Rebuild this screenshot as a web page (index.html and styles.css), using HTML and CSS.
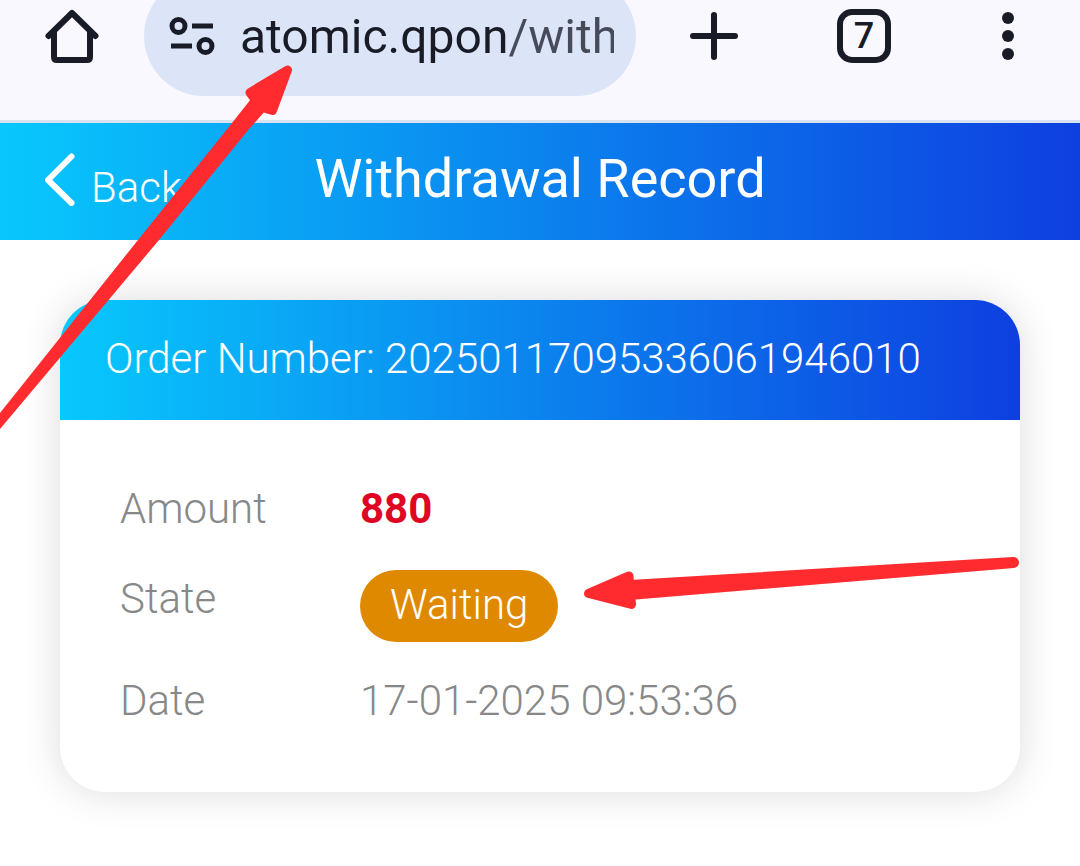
FILE: index.html
```html
<!DOCTYPE html>
<html lang="en">
<head>
<meta charset="utf-8">
<meta name="viewport" content="width=device-width, initial-scale=1">
<title>Withdrawal Record</title>
<link rel="stylesheet" href="styles.css">
</head>
<body>
<div class="toolbar">
  <div class="toolbar-row">
    <button class="tool" type="button" aria-label="Home">
      <svg width="60" height="60" viewBox="0 0 60 60" fill="none" stroke="#191b26" stroke-width="6" stroke-linecap="round" stroke-linejoin="round"><path d="M6.500 30L30 7L53.500 30"/><path d="M12 26V51Q12 54 15 54H45Q48 54 48 51V26"/></svg>
    </button>
    <div class="address">
      <svg class="site-icon" width="48" height="48" viewBox="0 0 48 48" fill="none" stroke="#191b26" stroke-width="5"><circle cx="10.500" cy="14" r="6.500"/><path d="M24 14H45M3 34H24"/><circle cx="37.500" cy="34" r="6.500"/></svg>
      <input class="url" type="text" aria-label="Address" value="atomic.qpon/with">
    </div>
    <button class="tool" type="button" aria-label="New tab">
      <svg width="60" height="60" viewBox="0 0 60 60" fill="none" stroke="#191b26" stroke-width="6" stroke-linecap="round"><path d="M30 9V51M9 30H51"/></svg>
    </button>
    <button class="tool" type="button" aria-label="Tabs"><span class="tab-count">7</span></button>
    <button class="tool" type="button" aria-label="Menu">
      <svg width="60" height="60" viewBox="0 0 60 60" fill="#191b26"><circle cx="30" cy="12" r="6"/><circle cx="30" cy="30" r="6"/><circle cx="30" cy="48" r="6"/></svg>
    </button>
  </div>
</div>
<header class="header">
  <a class="back" href="#">
    <svg width="30" height="54" viewBox="0 0 30 54" fill="none" stroke="#fff" stroke-width="6" stroke-linecap="round" stroke-linejoin="round"><path d="M26.500 4.500L3 28L26.500 51"/></svg>
    <span>Back</span>
  </a>
  <h1 class="title">Withdrawal Record</h1>
</header>
<main class="content">
  <section class="card">
    <h2 class="order">Order Number: 20250117095336061946010</h2>
    <dl class="details">
      <dt>Amount</dt>
      <dd class="amount">880</dd>
      <dt>State</dt>
      <dd><span class="state">Waiting</span></dd>
      <dt>Date</dt>
      <dd>17-01-2025 09:53:36</dd>
    </dl>
  </section>
</main>
<svg class="marks" width="1080" height="866" viewBox="0 0 1080 866" fill="#ff2b2f" stroke="#ff2b2f" stroke-linejoin="round" aria-hidden="true">
  <path stroke="none" d="M-6 421L0 413L138 240L228 128L251 99L266 110L249 129L159 240L0 429Z"/>
  <path stroke-width="9" d="M287.500 70L250 92.500L254 98L267 109L272.500 110.500Z"/>
  <path stroke="none" d="M630 580L1013 557A5.500 5.500 0 0 1 1014 568L630 600Z"/>
  <path stroke-width="9" d="M588.500 593.500L629 576L630 590L631.500 604.500Z"/>
</svg>
</body>
</html>
```
FILE: styles.css
```css
* {
  box-sizing: border-box;
}

body {
  margin: 0;
  position: relative;
  background: #fff;
  color: #888;
  font-family: Roboto, "Liberation Sans", sans-serif;
  font-size: 42px;
  font-weight: 300;
  line-height: 58px;
}

.toolbar {
  overflow: hidden;
  background: #f9f8fe;
  border-bottom: 3px solid #d9e2f0;
}

/* The toolbar is partly scrolled past the top edge. */
.toolbar-row {
  display: grid;
  grid-template-columns: 144px minmax(0, 1fr) 156px 144px 144px;
  align-items: center;
  margin: -24px 0 24px;
}

.tool {
  display: flex;
  justify-content: center;
  padding: 0;
  border: 0;
  background: none;
  color: #191b26;
}

.tab-count {
  width: 54px;
  height: 54px;
  border: 6px solid #191b26;
  border-radius: 15px;
  font: 500 36px/42px Roboto, sans-serif;
  text-align: center;
}

.address {
  display: flex;
  align-items: center;
  gap: 24px;
  height: 120px;
  padding: 0 22px 0 24px;
  border-radius: 60px;
  background: #dce4f8;
}

.site-icon {
  flex: none;
}

.url {
  flex: 1;
  min-width: 0;
  padding: 2px 0 0;
  border: 0;
  color: #191b26;
  background: linear-gradient(90deg, #191b26 269px, #474b59 269px);
  -webkit-background-clip: text;
  background-clip: text;
  -webkit-text-fill-color: transparent;
  font: 400 48px/60px Roboto, sans-serif;
}

.header {
  display: grid;
  grid-template-columns: 1fr auto 1fr;
  align-items: center;
  padding: 0 45px 6px;
  background: linear-gradient(90deg, #08c8fc, #0e3fe0);
  color: #fff;
}

.back {
  display: flex;
  align-items: flex-end;
  gap: 16px;
  color: inherit;
  line-height: 36px;
  text-decoration: none;
}

.title {
  margin: 0;
  font-size: 54px;
  font-weight: 400;
  line-height: 111px;
}

.content {
  padding: 60px;
}

.card {
  overflow: hidden;
  border-radius: 45px;
  background: #fff;
  box-shadow: 0 0 40px rgba(0, 0, 0, 0.14);
}

.order {
  margin: 0;
  padding: 30px 45px 32px;
  background: linear-gradient(90deg, #08c8fc, #0e3fe0);
  color: #fff;
  font-size: 42px;
  font-weight: 300;
}

.details {
  display: grid;
  grid-template-columns: 240px 1fr;
  row-gap: 32px;
  margin: 0;
  padding: 60px 60px 62px;
}

.details dd {
  margin: 0;
}

.details .amount {
  color: #df0623;
  font-weight: 700;
}

.state {
  display: block;
  width: fit-content;
  margin-bottom: -2px;
  padding: 6px 30px 8px;
  border-radius: 36px;
  background: #df8900;
  color: #fff;
}

.marks {
  position: absolute;
  top: 0;
  left: 0;
  pointer-events: none;
}
```
